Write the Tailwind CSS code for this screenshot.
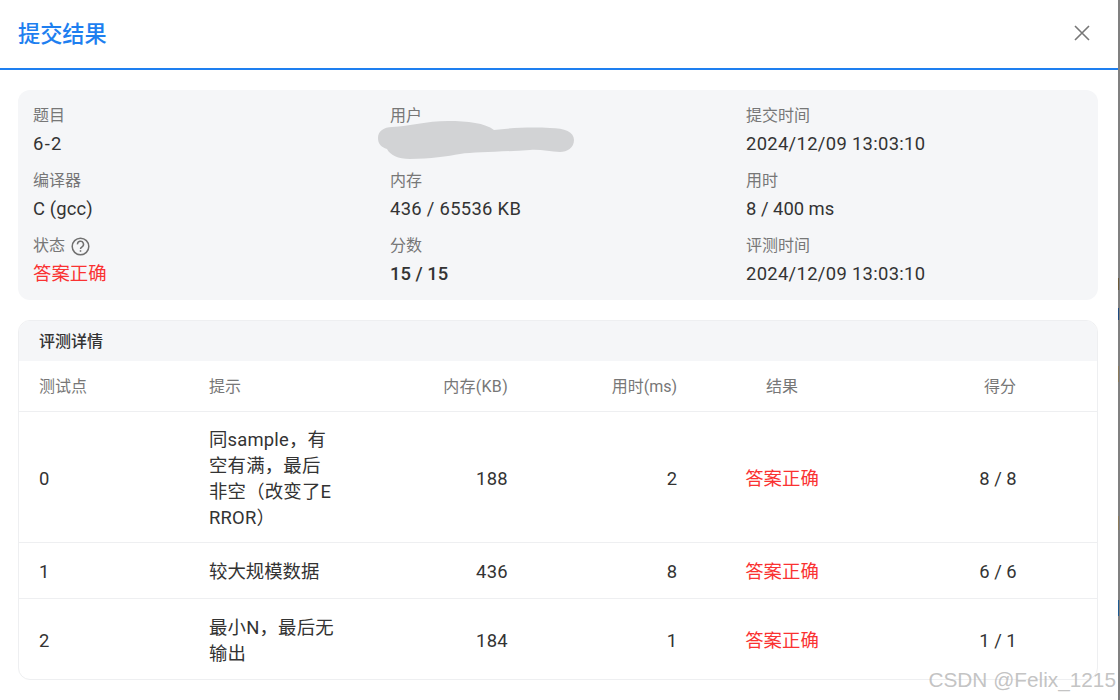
<!DOCTYPE html>
<html lang="zh-CN">
<head>
    <meta charset="UTF-8">
    <title>提交结果</title>
    <script src="https://cdn.jsdelivr.net/npm/@tailwindcss/browser@4"></script>
</head>
<body class="bg-white">
    <div class="relative w-[1120px] h-[700px] overflow-hidden font-['Roboto','Noto_Sans_CJK_SC',sans-serif] text-[18.4px] text-[#333]">
        <header class="h-[70px] flex items-center justify-between pl-[18px] pr-[28px] border-b-2 border-[#1e7ff0]">
            <h1 class="pt-[2px] text-[22.2px] font-medium text-[#1e7ff0]">提交结果</h1>
            <svg class="w-5 h-5 -mt-[2px]" viewBox="0 0 20 20" fill="none" stroke="#777" stroke-width="1.6"><path d="M3 3l14 14M17 3L3 17"/></svg>
        </header>

        <section class="relative mt-5 mx-[18px] w-[1080px] h-[210px] rounded-xl bg-[#f5f6f8] pt-[15px] pl-[15px] grid grid-cols-[357px_356px_1fr] auto-rows-[65px]">
            <div>
                <p class="text-[16px] leading-[22px] text-[#777]">题目</p>
                <p class="mt-[4px] leading-[26px] tracking-[1.3px]">6-2</p>
            </div>
            <div>
                <p class="text-[16px] leading-[22px] text-[#777]">用户</p>
            </div>
            <div>
                <p class="text-[16px] leading-[22px] text-[#777]">提交时间</p>
                <p class="mt-[4px] leading-[26px] tracking-[0.32px]">2024/12/09 13:03:10</p>
            </div>
            <div>
                <p class="text-[16px] leading-[22px] text-[#777]">编译器</p>
                <p class="mt-[4px] leading-[26px] tracking-[0.15px]">C (gcc)</p>
            </div>
            <div>
                <p class="text-[16px] leading-[22px] text-[#777]">内存</p>
                <p class="mt-[4px] leading-[26px] tracking-[0.3px]">436 / 65536 KB</p>
            </div>
            <div>
                <p class="text-[16px] leading-[22px] text-[#777]">用时</p>
                <p class="mt-[4px] leading-[26px]">8 / 400 ms</p>
            </div>
            <div>
                <p class="flex items-center gap-[6px] text-[16px] leading-[22px] text-[#777]">状态
                    <svg class="w-[19px] h-[19px]" viewBox="0 0 19 19" fill="none" stroke="#707070" stroke-width="1.5"><circle cx="9.5" cy="9.5" r="8.3"/><path d="M6.5 7.4a3 3 0 1 1 4.6 2.4c-1 .7-1.6 1.1-1.6 2.2"/><path d="M9.5 13.2v1.6"/></svg>
                </p>
                <p class="mt-[4px] leading-[26px] text-[#fa3232]">答案正确</p>
            </div>
            <div>
                <p class="text-[16px] leading-[22px] text-[#777]">分数</p>
                <p class="mt-[4px] leading-[26px] font-medium">15 / 15</p>
            </div>
            <div>
                <p class="text-[16px] leading-[22px] text-[#777]">评测时间</p>
                <p class="mt-[4px] leading-[26px] tracking-[0.32px]">2024/12/09 13:03:10</p>
            </div>
            <!-- scribbled out username -->
            <svg class="absolute left-[342px] top-0 w-[260px] h-[90px]" viewBox="0 0 260 90" fill="#d2d3d5"><path d="M18 48C18 41 24 37 32 37C50 36 66 31 88 31C108 31 125 33 134 40C150 38 170 37 190 38C205 38 214 42 214 50C214 58 207 62 200 62C190 62 180 59 170 60C140 62 115 62 100 64C88 66 70 69 50 69C38 69 30 65 27 59C21 57 18 54 18 48Z"/></svg>
        </section>

        <section class="mt-5 mx-[18px] w-[1080px] h-[360px] rounded-xl border border-[#eeeff1] overflow-hidden">
            <h2 class="h-10 pt-[2px] flex items-center px-5 bg-[#f5f6f8] text-[16px] font-medium text-[#333]">评测详情</h2>
            <div class="h-[51px] pt-[2px] grid grid-cols-[171px_170px_168px_169px_170px_1fr] items-center border-b border-[#eeeff1] text-[16px] text-[#777]">
                <span class="pl-5">测试点</span>
                <span class="pl-[19px]">提示</span>
                <span class="pr-5 text-right tracking-[0.3px]">内存(KB)</span>
                <span class="pr-5 text-right">用时(ms)</span>
                <span class="text-center">结果</span>
                <span class="pl-9 text-center">得分</span>
            </div>
            <div class="h-[131px] pt-[4px] grid grid-cols-[171px_170px_168px_169px_170px_1fr] items-center border-b border-[#eeeff1]">
                <span class="pl-5">0</span>
                <span class="pl-[19px] w-[145px] leading-[26px] break-all tracking-[0.2px]">同sample，有空有满，最后非空（改变了ERROR）</span>
                <span class="pr-5 text-right tracking-[0.3px]">188</span>
                <span class="pr-5 text-right">2</span>
                <span class="text-center text-[#fa3232]">答案正确</span>
                <span class="pl-8 text-center">8 / 8</span>
            </div>
            <div class="h-[56px] pt-[2px] grid grid-cols-[171px_170px_168px_169px_170px_1fr] items-center border-b border-[#eeeff1]">
                <span class="pl-5">1</span>
                <span class="pl-[19px]">较大规模数据</span>
                <span class="pr-5 text-right tracking-[0.3px]">436</span>
                <span class="pr-5 text-right">8</span>
                <span class="text-center text-[#fa3232]">答案正确</span>
                <span class="pl-8 text-center">6 / 6</span>
            </div>
            <div class="h-[81px] pt-[2px] grid grid-cols-[171px_170px_168px_169px_170px_1fr] items-center">
                <span class="pl-5">2</span>
                <span class="pl-[19px] w-[145px] leading-[26px] break-all tracking-[0.2px]">最小N，最后无输出</span>
                <span class="pr-5 text-right tracking-[0.3px]">184</span>
                <span class="pr-5 text-right">1</span>
                <span class="text-center text-[#fa3232]">答案正确</span>
                <span class="pl-8 text-center">1 / 1</span>
            </div>
        </section>

        <span class="absolute right-[4px] bottom-[9px] text-[20.8px] leading-none font-['Liberation_Sans',sans-serif] text-[#b4b4b4]/80">CSDN @Felix_1215</span>

        <!-- edge of the window behind the dialog -->
        <div class="absolute right-0 top-0 w-[2px] h-[700px] bg-[#808080]"></div>
        <div class="absolute right-[1px] top-[278px] w-[1px] h-[12px] bg-[#6b5a3c]"></div>
        <div class="absolute right-[1px] top-[308px] w-[1px] h-[12px] bg-[#1e4a80]"></div>
        <div class="absolute right-[1px] top-[366px] w-[1px] h-[16px] bg-[#8a7a5c]"></div>
        <div class="absolute right-[1px] top-[516px] w-[1px] h-[14px] bg-[#8a7a5c]"></div>
        <div class="absolute right-[1px] top-[600px] w-[1px] h-[16px] bg-[#1e5a90]"></div>
    </div>
</body>
</html>
